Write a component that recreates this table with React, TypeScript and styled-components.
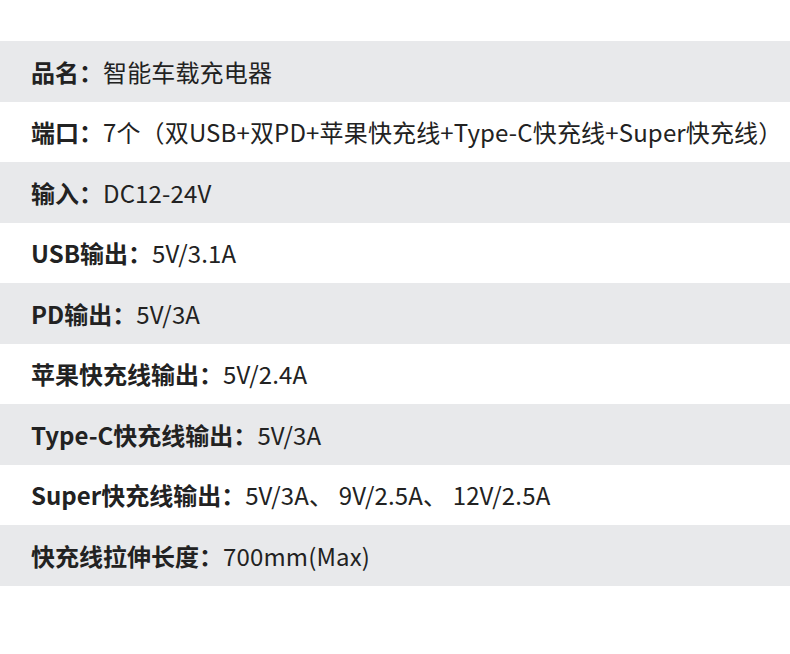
import React from 'react';
import styled, { createGlobalStyle } from 'styled-components';

interface Spec {
  label: string;
  value: string;
}

const specs: Spec[] = [
  { label: '品名：', value: '智能车载充电器' },
  { label: '端口：', value: '7个（双USB+双PD+苹果快充线+Type-C快充线+Super快充线）' },
  { label: '输入：', value: 'DC12-24V' },
  { label: 'USB输出：', value: '5V/3.1A' },
  { label: 'PD输出：', value: '5V/3A' },
  { label: '苹果快充线输出：', value: '5V/2.4A' },
  { label: 'Type-C快充线输出：', value: '5V/3A' },
  { label: 'Super快充线输出：', value: '5V/3A、 9V/2.5A、 12V/2.5A' },
  { label: '快充线拉伸长度：', value: '700mm(Max)' },
];

const App: React.FC = () => {
  return (
    <>
      <GlobalStyle />
      <Page>
        <List>
          {specs.map((spec, i) => (
            <Row key={spec.label} $shaded={i % 2 === 0}>
              <Label>{spec.label}</Label>
              <Value>{spec.value}</Value>
            </Row>
          ))}
        </List>
      </Page>
    </>
  );
};

export default App;

const GlobalStyle = createGlobalStyle`
  html, body {
    margin: 0;
    padding: 0;
    background: #ffffff;
  }
`;

const Page = styled.div`
  width: 790px;
  height: 654px;
  padding-top: 41px;
  box-sizing: border-box;
  background: #ffffff;
  font-family: 'Noto Sans CJK SC', 'Noto Sans', sans-serif;
  color: #222222;
`;

const List = styled.ul`
  margin: 0;
  padding: 0;
  list-style: none;
`;

const Row = styled.li<{ $shaded: boolean }>`
  height: 60.5px;
  display: flex;
  align-items: center;
  padding-left: 31px;
  background: ${(p) => (p.$shaded ? '#e8e9eb' : '#ffffff')};
  font-size: 24px;
  white-space: nowrap;
`;

const Label = styled.span`
  font-weight: 700;
`;

const Value = styled.span`
  font-weight: 400;
  letter-spacing: 0.15px;
`;
